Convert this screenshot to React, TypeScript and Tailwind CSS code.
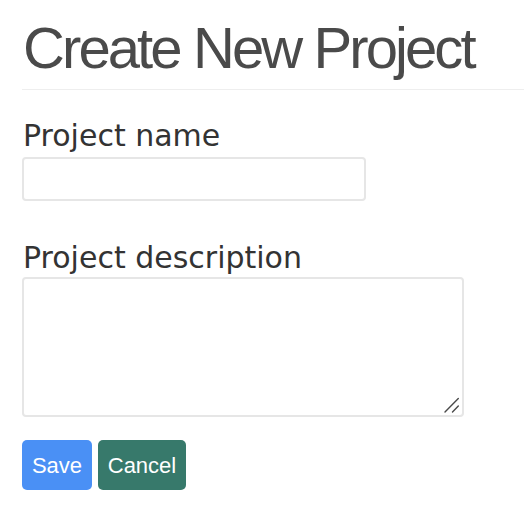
import React from "react";

export default function App() {
  return (
    <div className="w-[524px] h-[512px] bg-white overflow-hidden pl-[22px] pt-[18px]">
      <h1
        className="text-[#4a4a4a] text-[58px] leading-[60px] tracking-[-2.9px] pl-px pb-[11px] border-b border-[#eeeeee]"
        style={{ fontFamily: '"Liberation Sans", Arial, sans-serif' }}
      >
        Create New Project
      </h1>
      <form className="flex flex-col" style={{ fontFamily: '"DejaVu Sans", Verdana, sans-serif' }}>
        <label className="mt-[29px] text-[30px] leading-[34px] text-[#333333] pl-px">Project name</label>
        <input
          type="text"
          className="mt-[4px] w-[344px] h-[44px] border-2 border-[#e6e6e6] rounded-[4px] outline-none"
        />
        <label className="mt-[40px] text-[30px] leading-[34px] text-[#333333] pl-px">Project description</label>
        <div className="relative mt-[2px] w-[442px] h-[140px]">
          <textarea className="w-full h-full border-2 border-[#e6e6e6] rounded-[4px] outline-none resize-none" />
          <svg
            className="absolute right-[4px] bottom-[4px] w-[16px] h-[16px] pointer-events-none"
            viewBox="0 0 16 16"
            fill="none"
            stroke="#4a4a4a"
            strokeWidth="1.4"
            strokeLinecap="round"
          >
            <line x1="1" y1="15" x2="14.3" y2="1.5" />
            <line x1="8.5" y1="15" x2="14.3" y2="9" />
          </svg>
        </div>
        <div className="mt-[23px] flex gap-[6px]" style={{ fontFamily: '"Liberation Sans", Arial, sans-serif' }}>
          <button
            type="button"
            className="h-[50px] w-[70px] rounded-[5px] bg-[#4a90f5] text-white text-[22px]"
          >
            Save
          </button>
          <button
            type="button"
            className="h-[50px] w-[88px] rounded-[5px] bg-[#37796b] text-white text-[22px]"
          >
            Cancel
          </button>
        </div>
      </form>
    </div>
  );
}
